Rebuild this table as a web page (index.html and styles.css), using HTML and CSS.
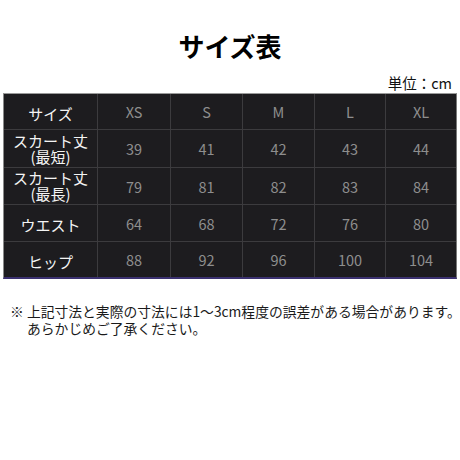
FILE: index.html
```html
<!DOCTYPE html>
<html lang="ja">
<head>
<meta charset="utf-8">
<link rel="stylesheet" href="styles.css">
</head>
<body>
<div class="page">
  <h1 class="title">サイズ表</h1>
  <div class="unit">単位：cm</div>
  <div class="table">
    <div class="cell label">サイズ</div>
    <div class="cell num">XS</div>
    <div class="cell num">S</div>
    <div class="cell num">M</div>
    <div class="cell num">L</div>
    <div class="cell num">XL</div>

    <div class="cell label two"><span>スカート丈</span><span>(最短)</span></div>
    <div class="cell num">39</div>
    <div class="cell num">41</div>
    <div class="cell num">42</div>
    <div class="cell num">43</div>
    <div class="cell num">44</div>

    <div class="cell label two"><span>スカート丈</span><span>(最長)</span></div>
    <div class="cell num">79</div>
    <div class="cell num">81</div>
    <div class="cell num">82</div>
    <div class="cell num">83</div>
    <div class="cell num">84</div>

    <div class="cell label">ウエスト</div>
    <div class="cell num">64</div>
    <div class="cell num">68</div>
    <div class="cell num">72</div>
    <div class="cell num">76</div>
    <div class="cell num">80</div>

    <div class="cell label">ヒップ</div>
    <div class="cell num">88</div>
    <div class="cell num">92</div>
    <div class="cell num">96</div>
    <div class="cell num">100</div>
    <div class="cell num">104</div>
  </div>
  <p class="note"><span class="line">※ 上記寸法と実際の寸法には1〜3cm程度の誤差がある場合があります。</span><br>あらかじめご了承ください。</p>
</div>
</body>
</html>
```

FILE: styles.css
```css
html, body {
  margin: 0;
  padding: 0;
  background: #ffffff;
}
body {
  font-family: "Noto Sans CJK JP", "Noto Sans", sans-serif;
  color: #111;
}
.page {
  width: 460px;
  height: 460px;
  overflow: hidden;
  padding-top: 27px;
  box-sizing: border-box;
}
.title {
  margin: 0;
  text-align: center;
  font-size: 26px;
  line-height: 38px;
  font-weight: 700;
  color: #000;
}
.unit {
  margin-top: 8px;
  text-align: right;
  padding-right: 8px;
  font-size: 14.5px;
  line-height: 20px;
  color: #111;
}
.table {
  margin-left: 3px;
  width: 452px;
  display: grid;
  grid-template-columns: 93px 72px 71px 71px 70px 70px;
  grid-template-rows: 35px 37px 36px 36px 35px;
  gap: 1px;
  background: #3c3b3e;
  border-top: 1px solid #9a9a9a;
  border-left: 1px solid #8a8a8a;
  border-right: 1px solid #7a7a7a;
  border-bottom: 2px solid #3b3170;
}
.cell {
  background: #1d1c1f;
  display: flex;
  align-items: center;
  justify-content: center;
}
.label {
  color: #f4f4f4;
  font-size: 15px;
  padding-top: 3px;
  box-sizing: border-box;
}
.two {
  flex-direction: column;
  line-height: 16px;
  padding-top: 0;
}
.num {
  color: #8e8e8e;
  font-size: 14.5px;
}
.note {
  margin: 24px 0 0 0;
  padding-left: 27px;
  text-indent: -17px;
  font-size: 13.8px;
  line-height: 17px;
  color: #1a1a1a;
}
.line {
  white-space: nowrap;
}
```
